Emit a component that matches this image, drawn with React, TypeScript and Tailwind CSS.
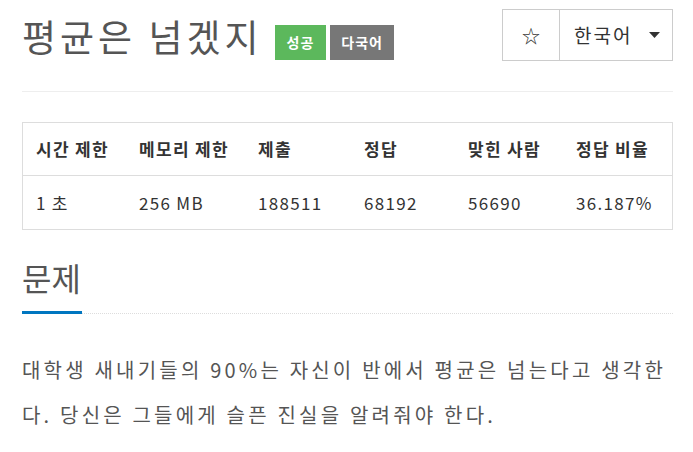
import React from 'react';

const headers = ['시간 제한', '메모리 제한', '제출', '정답', '맞힌 사람', '정답 비율'];
const values = ['1 초', '256 MB', '188511', '68192', '56690', '36.187%'];

const App: React.FC = () => {
  return (
    <div className="w-[693px] h-[452px] bg-white overflow-hidden font-['Noto_Sans_CJK_KR',sans-serif] text-[#555]">
      <div className="ml-[22px] w-[651px]">
        {/* Title */}
        <div className="flex items-start justify-between pt-[9px] pb-[30px] border-b border-[#eee]">
          <div className="flex items-end gap-[12px] pt-[2px]">
            <h1 className="text-[37px] leading-[50px] tracking-[4px] text-[#555]">평균은 넘겠지</h1>
            <div className="flex gap-[4px] mb-[1px]">
              <span className="h-[35px] px-[12px] flex items-center bg-[#5cb85c] text-white text-[14px] tracking-[1px] font-bold">성공</span>
              <span className="h-[35px] px-[11px] flex items-center bg-[#777] text-white text-[14px] tracking-[1px] font-bold">다국어</span>
            </div>
          </div>
          <div className="flex h-[52px] border border-[#ccc]">
            <button className="w-[57px] flex items-center justify-center border-r border-[#ccc] text-[18px] text-[#333]">☆</button>
            <button className="w-[112px] flex items-center pl-[14px] gap-[17px] text-[19px] tracking-[2px] text-[#333]">
              한국어
              <svg width="11" height="6" viewBox="0 0 11 6"><path d="M0 0h11L5.5 6z" fill="#333" /></svg>
            </button>
          </div>
        </div>

        {/* Info table */}
        <div className="mt-[30px] border border-[#ddd] text-[#333] text-[17px] tracking-[1.3px]">
          <div className="grid grid-cols-[103px_119px_106px_104px_108px_1fr] h-[53px] items-center border-b border-[#ddd] font-bold">
            {headers.map((h) => (
              <div key={h} className="pl-[13px]">{h}</div>
            ))}
          </div>
          <div className="grid grid-cols-[103px_119px_106px_104px_108px_1fr] h-[53px] items-center">
            {values.map((v) => (
              <div key={v} className="pl-[13px]">{v}</div>
            ))}
          </div>
        </div>

        {/* Problem */}
        <div className="mt-[24px]">
          <h2 className="text-[32px] leading-[46px] text-[#555]">문제</h2>
          <div className="flex items-end mt-[11px]">
            <div className="w-[60px] h-[3px] bg-[#0076c0]" />
            <div className="flex-1 border-b border-dotted border-[#ddd]" />
          </div>
          <p className="mt-[33px] text-[20px] leading-[45px] tracking-[3.2px] text-[#555]">
            대학생 새내기들의 90%는 자신이 반에서 평균은 넘는다고 생각한다. 당신은 그들에게 슬픈 진실을 알려줘야 한다.
          </p>
        </div>
      </div>
    </div>
  );
};

export default App;
